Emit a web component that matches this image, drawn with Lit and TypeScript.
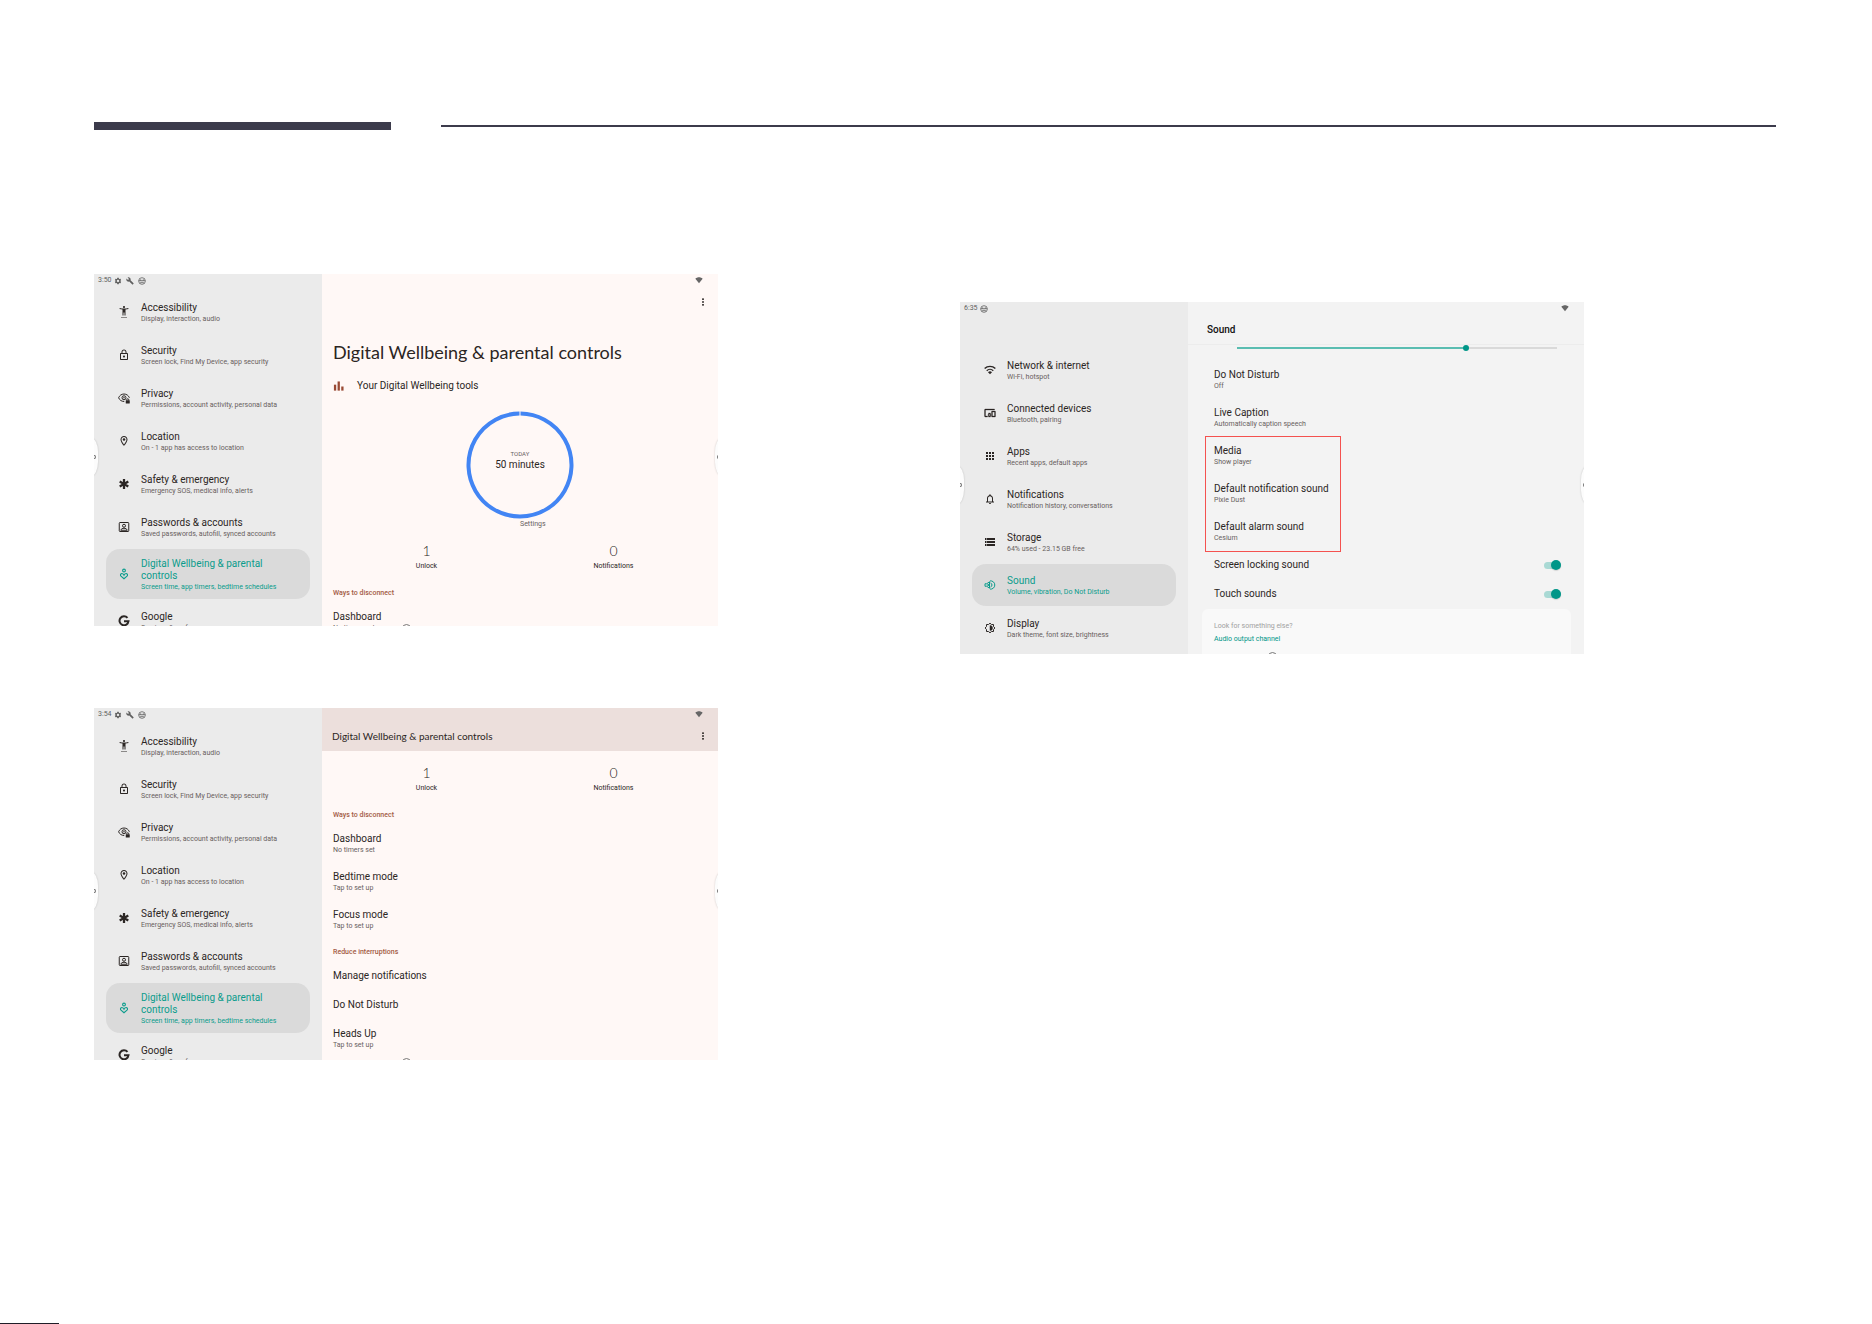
import { LitElement, html, svg, css, nothing, TemplateResult } from "lit";
import { customElement, property } from "lit/decorators.js";
import { classMap } from "lit/directives/class-map.js";

const icons: Record<string, TemplateResult> = {
  gear: svg`<path fill-rule="evenodd" d="M19.14 12.94c.04-.3.06-.61.06-.94 0-.32-.02-.64-.07-.94l2.03-1.58c.18-.14.23-.41.12-.61l-1.92-3.32c-.12-.22-.37-.29-.59-.22l-2.39.96c-.5-.38-1.03-.7-1.62-.94l-.36-2.54c-.04-.24-.24-.41-.48-.41h-3.84c-.24 0-.43.17-.47.41l-.36 2.54c-.59.24-1.13.57-1.62.94l-2.39-.96c-.22-.08-.47 0-.59.22L2.74 8.87c-.12.21-.08.47.12.61l2.03 1.58c-.05.3-.09.63-.09.94s.02.64.07.94l-2.03 1.58c-.18.14-.23.41-.12.61l1.92 3.32c.12.22.37.29.59.22l2.39-.96c.5.38 1.03.7 1.62.94l.36 2.54c.05.24.24.41.48.41h3.84c.24 0 .44-.17.47-.41l.36-2.54c.59-.24 1.13-.56 1.62-.94l2.39.96c.22.08.47 0 .59-.22l1.92-3.32c.12-.22.07-.47-.12-.61l-2.01-1.58zM12 15.6c-1.98 0-3.6-1.62-3.6-3.6s1.62-3.6 3.6-3.6 3.6 1.62 3.6 3.6-1.62 3.6-3.6 3.6z"/>`,
  wrench: svg`<path d="M22.7 19l-9.1-9.1c.9-2.3.4-5-1.5-6.9-2-2-5-2.4-7.4-1.3L9 6 6 9 1.6 4.7C.4 7.1.9 10.1 2.9 12.1c1.9 1.9 4.6 2.4 6.9 1.5l9.1 9.1c.4.4 1 .4 1.4 0l2.3-2.3c.5-.4.5-1.1.1-1.4z"/>`,
  face: svg`<circle cx="12" cy="12" r="10" fill="none" stroke="currentColor" stroke-width="2.4"/><path fill="none" stroke="currentColor" stroke-width="2.4" d="M2.5 11h19M8 7v4M16 7v4M8 16h8M8 16v3M16 16v3"/>`,
  signal: svg`<path d="M12 22L1 8.500C4 5.500 8 4 12 4s8 1.500 11 4.500z"/>`,
  dots: svg`<rect x="9.500" y="1" width="5" height="5"/><rect x="9.500" y="9.500" width="5" height="5"/><rect x="9.500" y="18" width="5" height="5"/>`,
  accessibility: svg`<path d="M20.500 4c-2.610.7-5.670 1-8.500 1s-5.890-.3-8.500-1L3 6c1.860.5 4 .830 6 1v12h2v-6h2v6h2V7c2-.170 4.140-.5 6-1l-.5-2zM12 4c1.100 0 2-.9 2-2s-.9-2-2-2-2 .9-2 2 .9 2 2 2zM7 24h2v-2H7v2zm4 0h2v-2h-2v2zm4 0h2v-2h-2v2z"/>`,
  lock: svg`<path fill-rule="evenodd" d="M12 17c1.100 0 2-.9 2-2s-.9-2-2-2-2 .9-2 2 .9 2 2 2zm6-9h-1V6c0-2.760-2.240-5-5-5S7 3.240 7 6v2H6c-1.100 0-2 .9-2 2v10c0 1.100.9 2 2 2h12c1.100 0 2-.9 2-2V10c0-1.100-.9-2-2-2zM8.900 6c0-1.710 1.390-3.100 3.100-3.100s3.100 1.390 3.100 3.100v2H8.900V6zM18 20H6V10h12v10z"/>`,
  privacy: svg`<g fill="none" stroke="currentColor" stroke-width="2"><path d="M12.500 19C7 19 3 16 1.200 11.500 3 7 7 4 12 4s9 3 10.800 7.500"/><circle cx="12" cy="11.500" r="4"/><path d="M17.500 17v-1.500a2 2 0 0 1 4 0V17"/></g><circle cx="12" cy="11.500" r="1.500"/><rect x="15.500" y="16.500" width="8" height="6.500" rx="1"/>`,
  place: svg`<path fill-rule="evenodd" d="M12 2C8.130 2 5 5.130 5 9c0 5.250 7 13 7 13s7-7.750 7-13c0-3.870-3.130-7-7-7zM7 9c0-2.760 2.240-5 5-5s5 2.240 5 5c0 2.880-2.880 7.190-5 9.880C9.920 16.210 7 11.850 7 9z"/><circle cx="12" cy="9" r="2.500"/>`,
  emergency: svg`<path fill="none" stroke="currentColor" stroke-width="4.500" d="M12 2v20M3.400 7l17.200 10M20.600 7L3.400 17"/>`,
  account: svg`<g fill="none" stroke="currentColor" stroke-width="2"><rect x="2.500" y="3" width="19" height="18" rx="1.500"/><circle cx="12" cy="9.500" r="3"/><path d="M5.500 18.500c1-3 3.500-4 6.500-4s5.500 1 6.500 4z"/></g>`,
  wellbeing: svg`<g fill="none" stroke="currentColor" stroke-width="2.200"><circle cx="12" cy="5" r="2.800"/><path d="M12 21.500l-6-5.200c-1.800-1.800-1.300-5 1.300-5.200 2.200 0 3.900 1.500 4.700 3.200.8-1.700 2.500-3.200 4.700-3.200 2.600.2 3.100 3.400 1.300 5.200z"/></g>`,
  google: svg`<path fill="none" stroke="currentColor" stroke-width="4" d="M19 5.800A9 9 0 1 0 21 12.500h-9"/>`,
  wifi: svg`<g fill="none" stroke="currentColor" stroke-width="2.800"><path d="M1.300 9.200a15 15 0 0 1 21.400 0"/><path d="M5.500 13.500a9.200 9.200 0 0 1 13 0"/></g><path d="M12 20.500l-4-4a5.700 5.700 0 0 1 8 0z"/>`,
  devices: svg`<path fill-rule="evenodd" d="M3 6h18V4H3c-1.100 0-2 .9-2 2v12c0 1.100.9 2 2 2h4v-2H3V6zm10 6H9v1.780c-.610.550-1 1.330-1 2.220s.390 1.670 1 2.220V20h4v-1.780c.610-.550 1-1.340 1-2.220s-.390-1.670-1-2.220V12zm-2 5.500c-.830 0-1.500-.670-1.500-1.500s.670-1.500 1.500-1.500 1.500.670 1.500 1.500-.670 1.500-1.500 1.500zM22 8h-6c-.5 0-1 .5-1 1v10c0 .5.5 1 1 1h6c.5 0 1-.5 1-1V9c0-.5-.5-1-1-1zm-1 10h-4v-8h4v8z" stroke="currentColor" stroke-width=".6"/>`,
  apps: svg`<path d="M4 8h4V4H4v4zm6 12h4v-4h-4v4zm-6 0h4v-4H4v4zm0-6h4v-4H4v4zm6 0h4v-4h-4v4zm6-10v4h4V4h-4zm-6 4h4V4h-4v4zm6 6h4v-4h-4v4zm0 6h4v-4h-4v4z"/>`,
  bell: svg`<path fill-rule="evenodd" d="M12 22c1.100 0 2-.9 2-2h-4c0 1.100.9 2 2 2zm6-6v-5c0-3.070-1.630-5.640-4.500-6.320V4c0-.830-.670-1.500-1.500-1.500s-1.500.670-1.500 1.500v.680C7.640 5.360 6 7.920 6 11v5l-2 2v1h16v-1l-2-2zm-2 1H8v-6c0-2.480 1.510-4.500 4-4.500s4 2.020 4 4.500v6z"/>`,
  storage: svg`<path fill-rule="evenodd" d="M2 20h20v-4H2v4zm2-3h2v2H4v-2zM2 4v4h20V4H2zm4 3H4V5h2v2zm-4 7h20v-4H2v4zm2-3h2v2H4v-2z"/>`,
  sound: svg`<g fill="none" stroke="currentColor" stroke-width="2"><path d="M2 9.500h3.500L11 5.500v13l-5.500-4H2z"/><path d="M12 3.800a8.300 8.300 0 1 1 0 16.400M13 8a4.200 4.200 0 0 1 0 8"/></g><circle cx="8.500" cy="12" r="2"/>`,
  brightness: svg`<path fill="none" stroke="currentColor" stroke-width="2" d="M12 2.300l2.900 2.700H19v4.100l2.900 2.900-2.900 2.900V19h-4.100L12 21.700 9.100 19H5v-4.100L2.100 12 5 9.100V5h4.100z"/><path d="M12 7a5 5 0 0 1 0 10z" stroke="currentColor" stroke-width="1"/>`,
  bars: svg`<rect x="2" y="8" width="5" height="13"/><rect x="10" y="1" width="5" height="20"/><rect x="18" y="12" width="5" height="9"/>`,
};

const icon = (name: string) =>
  html`<svg class="icon" viewBox="0 0 24 24" aria-hidden="true">${icons[name]}</svg>`;

interface Entry {
  icon: string;
  title: string;
  note: string;
}

interface Setting {
  title: string;
  note?: string;
}

const deviceEntries: Entry[] = [
  { icon: "accessibility", title: "Accessibility", note: "Display, interaction, audio" },
  { icon: "lock", title: "Security", note: "Screen lock, Find My Device, app security" },
  { icon: "privacy", title: "Privacy", note: "Permissions, account activity, personal data" },
  { icon: "place", title: "Location", note: "On - 1 app has access to location" },
  { icon: "emergency", title: "Safety & emergency", note: "Emergency SOS, medical info, alerts" },
  { icon: "account", title: "Passwords & accounts", note: "Saved passwords, autofill, synced accounts" },
  { icon: "wellbeing", title: "Digital Wellbeing & parental controls", note: "Screen time, app timers, bedtime schedules" },
  { icon: "google", title: "Google", note: "Services & preferences" },
];

const systemEntries: Entry[] = [
  { icon: "wifi", title: "Network & internet", note: "Wi-Fi, hotspot" },
  { icon: "devices", title: "Connected devices", note: "Bluetooth, pairing" },
  { icon: "apps", title: "Apps", note: "Recent apps, default apps" },
  { icon: "bell", title: "Notifications", note: "Notification history, conversations" },
  { icon: "storage", title: "Storage", note: "64% used - 23.15 GB free" },
  { icon: "sound", title: "Sound", note: "Volume, vibration, Do Not Disturb" },
  { icon: "brightness", title: "Display", note: "Dark theme, font size, brightness" },
];

const base = css`
  *,
  *::before,
  *::after {
    box-sizing: border-box;
  }
  .icon {
    display: block;
    width: 12px;
    height: 12px;
    flex: none;
    fill: currentColor;
  }
  button {
    margin: 0;
    padding: 0;
    border: 0;
    background: none;
    color: inherit;
    font: inherit;
    text-align: left;
  }
`;

const paneStyles = css`
  .setting {
    display: flex;
    flex-direction: column;
    width: 100%;
    padding: 8px 0 9px;
    font-size: 10px;
    line-height: 12px;
  }
  .setting.noted {
    padding-bottom: 8px;
  }
  .note {
    font-size: 7px;
    line-height: 10px;
    color: #68615e;
  }
`;

const setting = (s: Setting) => html`
  <button type="button" class=${classMap({ setting: true, noted: !!s.note })}>
    <span>${s.title}</span>
    ${s.note ? html`<span class="note">${s.note}</span>` : nothing}
  </button>
`;

@customElement("settings-window")
export class SettingsWindow extends LitElement {
  @property() time = "";
  @property({ attribute: false }) tray: string[] = [];
  @property({ attribute: false }) entries: Entry[] = [];
  @property() selected = "";
  @property({ type: Boolean, reflect: true }) spaced = false;

  static styles = [
    base,
    css`
      :host {
        position: relative;
        display: grid;
        grid-template-columns: 19fr 33fr;
        aspect-ratio: 39 / 22;
        overflow: hidden;
        font-family: Roboto, "Liberation Sans", sans-serif;
        color: #2b2624;
      }
      .side {
        min-width: 0;
        min-height: 0;
        overflow: hidden;
        background: #ebebeb;
      }
      .status {
        display: flex;
        align-items: center;
        gap: 4px;
        height: 13px;
        padding-left: 4px;
        font-size: 7px;
        line-height: 13px;
        color: #5f5f5f;
      }
      .status .icon {
        width: 8px;
        height: 8px;
      }
      .clock {
        width: 12px;
        white-space: nowrap;
      }
      .menu {
        display: flex;
        flex-direction: column;
        gap: 1px;
        padding: 4px 12px 0;
      }
      :host([spaced]) .menu {
        padding-top: 34px;
      }
      .entry {
        display: flex;
        align-items: center;
        gap: 11px;
        min-height: 42px;
        padding: 7px 24px 7px 12px;
        border-radius: 14px;
        color: inherit;
        text-decoration: none;
      }
      .entry.current {
        background: #dadada;
        color: #0b9c8c;
      }
      .label {
        display: flex;
        flex-direction: column;
        padding-top: 2px;
        font-size: 10px;
        line-height: 12px;
      }
      .hint {
        font-size: 7px;
        line-height: 10px;
        color: #68605d;
        white-space: nowrap;
      }
      .current .hint {
        color: inherit;
      }
      .pane {
        min-width: 0;
        min-height: 0;
        overflow: hidden;
      }
      .network {
        position: absolute;
        top: 2px;
        right: 15px;
        color: #666;
      }
      .network .icon {
        width: 8px;
        height: 8px;
      }
      .handle {
        position: absolute;
        top: 164px;
        display: flex;
        align-items: center;
        justify-content: flex-end;
        width: 14px;
        height: 38px;
        border-radius: 7px / 14px;
        background: #fcfcfc;
        box-shadow: 0 0 2px #00000033;
      }
      .handle::before {
        content: "";
        width: 3px;
        height: 4px;
        border: 1px solid #777;
        border-radius: 50%;
      }
      .handle.left {
        left: -10px;
        padding-right: 2px;
      }
      .handle.right {
        right: -11px;
        justify-content: flex-start;
        padding-left: 2px;
      }
      .home {
        position: absolute;
        bottom: -7px;
        left: 50%;
        width: 9px;
        height: 9px;
        margin-left: -4px;
        border: 1px solid #777;
        border-radius: 50%;
      }
    `,
  ];

  render() {
    return html`
      <section class="side">
        <div class="status">
          <span class="clock">${this.time}</span>
          ${this.tray.map((name) => icon(name))}
        </div>
        <nav class="menu" aria-label="Settings">
          ${this.entries.map(
            (e) => html`
              <a href="#" class=${classMap({ entry: true, current: e.icon === this.selected })}>
                ${icon(e.icon)}
                <span class="label">
                  <span>${e.title}</span>
                  <span class="hint">${e.note}</span>
                </span>
              </a>
            `
          )}
        </nav>
      </section>
      <section class="pane"><slot></slot></section>
      <span class="network">${icon("signal")}</span>
      <span class="handle left"></span>
      <span class="handle right"></span>
      <span class="home"></span>
    `;
  }
}

@customElement("wellbeing-pane")
export class WellbeingPane extends LitElement {
  @property({ type: Boolean }) scrolled = false;

  static styles = [
    base,
    paneStyles,
    css`
      :host {
        display: block;
        min-height: 100%;
        background: #fff8f6;
      }
      .bar {
        display: flex;
        align-items: center;
        justify-content: space-between;
        height: 43px;
        padding: 13px 10px 0;
        font-family: Lato, Roboto, sans-serif;
        font-size: 10px;
        line-height: 14px;
      }
      .bar.filled {
        background: #ecdfdc;
      }
      .bar .icon {
        width: 10px;
        height: 8px;
      }
      .bar h2 {
        margin: 0;
        font: inherit;
      }
      .body {
        padding: 0 11px;
      }
      h1 {
        margin: 0;
        padding-top: 23px;
        font-family: Lato, Roboto, sans-serif;
        font-size: 18px;
        font-weight: 400;
        line-height: 24px;
        color: #2b2523;
      }
      .tools {
        display: flex;
        align-items: center;
        gap: 13px;
        padding: 16px 0 19px;
        font-size: 10px;
        line-height: 12px;
      }
      .tools .icon {
        width: 11px;
        height: 11px;
        color: #994a35;
      }
      .dial {
        display: grid;
        justify-items: center;
        align-items: center;
      }
      .dial > * {
        grid-area: 1 / 1;
      }
      .ring {
        display: block;
        width: 108px;
        height: 108px;
        fill: none;
        stroke: #4285f4;
        stroke-width: 4px;
      }
      .reading {
        display: flex;
        flex-direction: column;
        align-items: center;
        padding-bottom: 11px;
        font-size: 10px;
        line-height: 12px;
      }
      .today {
        font-size: 6px;
        line-height: 10px;
        color: #68615e;
      }
      .more {
        display: block;
        margin-left: 50%;
        font-size: 7px;
        line-height: 10px;
        color: #68615e;
      }
      .stats {
        display: grid;
        grid-template-columns: 1fr 1fr;
        margin: 0;
        padding: 14px 0 9px;
        text-align: center;
      }
      .stat {
        display: flex;
        flex-direction: column-reverse;
        gap: 2px;
      }
      .stat dt {
        font-size: 7px;
        line-height: 10px;
      }
      .stat dd {
        margin: 0;
        font-family: Lato, Roboto, sans-serif;
        font-size: 14px;
        font-weight: 300;
        line-height: 16px;
      }
      h3 {
        margin: 0;
        padding: 8px 0 5px;
        font-size: 7px;
        font-weight: 500;
        line-height: 10px;
        color: #a25a43;
      }
    `,
  ];

  render() {
    const heading = "Digital Wellbeing & parental controls";
    return html`
      <header class=${classMap({ bar: true, filled: this.scrolled })}>
        <h2>${this.scrolled ? heading : nothing}</h2>
        <button type="button" aria-label="More options">${icon("dots")}</button>
      </header>
      <div class="body">
        ${this.scrolled
          ? nothing
          : html`
              <h1>${heading}</h1>
              <div class="tools">${icon("bars")}<span>Your Digital Wellbeing tools</span></div>
              <div class="dial">
                <svg class="ring" viewBox="0 0 108 108" aria-hidden="true">
                  <path d="M54.500 2.500A51.500 51.500 0 1 1 53.500 2.500" />
                </svg>
                <div class="reading"><span class="today">TODAY</span><span>50 minutes</span></div>
              </div>
              <button type="button" class="more">Settings</button>
            `}
        <dl class="stats">
          <div class="stat"><dt>Unlock</dt><dd>1</dd></div>
          <div class="stat"><dt>Notifications</dt><dd>0</dd></div>
        </dl>
        <h3>Ways to disconnect</h3>
        ${setting({ title: "Dashboard", note: "No timers set" })}
        ${this.scrolled
          ? html`
              ${setting({ title: "Bedtime mode", note: "Tap to set up" })}
              ${setting({ title: "Focus mode", note: "Tap to set up" })}
              <h3>Reduce interruptions</h3>
              ${setting({ title: "Manage notifications" })}
              ${setting({ title: "Do Not Disturb" })}
              ${setting({ title: "Heads Up", note: "Tap to set up" })}
            `
          : nothing}
      </div>
    `;
  }
}

@customElement("sound-pane")
export class SoundPane extends LitElement {
  static styles = [
    base,
    paneStyles,
    css`
      :host {
        display: block;
        min-height: 100%;
        background: #f3f3f3;
      }
      .bar {
        height: 43px;
        padding: 21px 19px 0;
        border-bottom: 1px solid #ececec;
      }
      h1 {
        margin: 0;
        font-size: 10px;
        font-weight: 500;
        line-height: 14px;
        color: #111;
      }
      .body {
        padding: 0 13px 0 14px;
      }
      .volume {
        display: block;
        padding: 0 14px 10px 35px;
      }
      .volume input {
        display: block;
        width: 100%;
        height: 6px;
        margin: 0;
        appearance: none;
        background: linear-gradient(
            to right,
            #5abdb1 var(--level),
            #d9d9d9 var(--level)
          )
          center / 100% 2px no-repeat;
      }
      .volume input::-webkit-slider-thumb {
        appearance: none;
        width: 6px;
        height: 6px;
        border-radius: 50%;
        background: #009688;
      }
      .list {
        padding: 0 10px 0 12px;
      }
      .marked {
        width: max-content;
        margin-left: -8px;
        padding: 0 11px 0 8px;
        outline: 1px solid #f4514f;
      }
      .switch {
        display: flex;
        align-items: center;
        justify-content: space-between;
        padding: 8px 0 9px;
        font-size: 10px;
        line-height: 12px;
      }
      .switch input {
        appearance: none;
        display: flex;
        align-items: center;
        justify-content: flex-end;
        width: 17px;
        height: 7px;
        margin: 0;
        border-radius: 4px;
        background: #a9d9d4;
      }
      .switch input::before {
        content: "";
        flex: none;
        width: 10px;
        height: 10px;
        border-radius: 50%;
        background: #009688;
        box-shadow: 0 1px 1px #00000022;
      }
      .card {
        display: flex;
        flex-direction: column;
        align-items: flex-start;
        gap: 3px;
        min-height: 60px;
        padding: 12px;
        border-radius: 6px;
        background: #f9f9f9;
        font-size: 7px;
        line-height: 10px;
        color: #a0a0a0;
      }
      .card a {
        color: #009688;
        text-decoration: none;
      }
    `,
  ];

  render() {
    const level = 72;
    return html`
      <header class="bar"><h1>Sound</h1></header>
      <div class="body">
        <label class="volume">
          <input type="range" min="0" max="100" .value=${String(level)} style="--level: ${level}%" aria-label="Volume" />
        </label>
        <div class="list">
          ${setting({ title: "Do Not Disturb", note: "Off" })}
          ${setting({ title: "Live Caption", note: "Automatically caption speech" })}
          <div class="marked">
            ${setting({ title: "Media", note: "Show player" })}
            ${setting({ title: "Default notification sound", note: "Pixie Dust" })}
            ${setting({ title: "Default alarm sound", note: "Cesium" })}
          </div>
          <label class="switch">Screen locking sound<input type="checkbox" role="switch" checked /></label>
          <label class="switch">Touch sounds<input type="checkbox" role="switch" checked /></label>
        </div>
        <div class="card"><span>Look for something else?</span><a href="#">Audio output channel</a></div>
      </div>
    `;
  }
}

@customElement("app-root")
export class AppRoot extends LitElement {
  static styles = [
    base,
    css`
      :host {
        display: flex;
        flex-direction: column;
        min-height: 100vh;
        background: #fff;
      }
      .rule {
        display: grid;
        grid-template-columns: 297fr 1335fr;
        align-items: center;
        gap: 50px;
        padding: 122px 96px 0 94px;
      }
      .thick {
        height: 8px;
        background: #3c3b4b;
      }
      .thin {
        height: 2px;
        background: #3c3b4b;
      }
      .columns {
        display: grid;
        grid-template-columns: 1fr 1fr;
        align-items: start;
        gap: 242px;
        padding: 144px 288px 0 94px;
      }
      .column {
        display: flex;
        flex-direction: column;
        gap: 82px;
      }
      .column.second {
        padding-top: 28px;
      }
      .foot {
        width: 59px;
        height: 1px;
        margin-top: auto;
        background: #1f1e28;
      }
    `,
  ];

  render() {
    const tray = ["gear", "wrench", "face"];
    return html`
      <div class="rule"><div class="thick"></div><div class="thin"></div></div>
      <main class="columns">
        <div class="column">
          <settings-window time="3:50" .tray=${tray} .entries=${deviceEntries} selected="wellbeing">
            <wellbeing-pane></wellbeing-pane>
          </settings-window>
          <settings-window time="3:54" .tray=${tray} .entries=${deviceEntries} selected="wellbeing">
            <wellbeing-pane scrolled></wellbeing-pane>
          </settings-window>
        </div>
        <div class="column second">
          <settings-window time="6:35" .tray=${["face"]} .entries=${systemEntries} selected="sound" spaced>
            <sound-pane></sound-pane>
          </settings-window>
        </div>
      </main>
      <div class="foot"></div>
    `;
  }
}
